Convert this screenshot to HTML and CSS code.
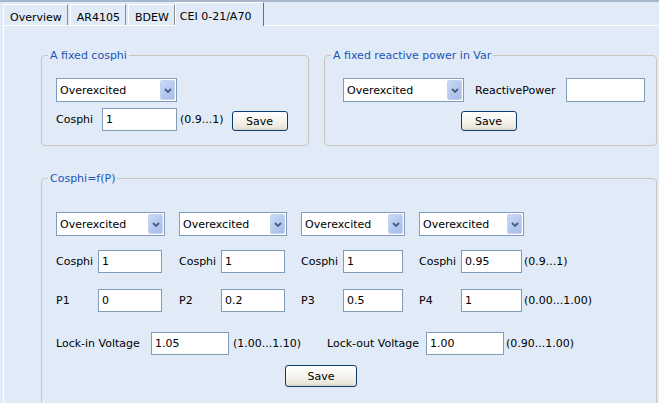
FILE: index.html
```html
<!DOCTYPE html>
<html>
<head>
<meta charset="utf-8">
<title>CEI 0-21/A70</title>
<link rel="stylesheet" href="styles.css">
</head>
<body>
<div class="tabbar">
  <div class="tab">Overview</div>
  <div class="tab">AR4105</div>
  <div class="tab">BDEW</div>
  <div class="tab active">CEI 0-21/A70</div>
</div>
<div class="panel">
  <div class="top-row">
    <fieldset class="fs fs-cos">
      <legend>A fixed cosphi</legend>
      <div class="select w121"><span class="sel-text">Overexcited</span><span class="arrow"><svg width="8" height="5" viewBox="0 0 8 5"><path d="M1 1l3 3 3-3" fill="none" stroke="#4a5d82" stroke-width="1.8"/></svg></span></div>
      <div class="row mt6">
        <span class="lbl w46">Cosphi</span>
        <input class="tb w75" type="text" value="1">
        <span class="range ml3">(0.9...1)</span>
        <button class="btn ml8 bottom">Save</button>
      </div>
    </fieldset>
    <fieldset class="fs fs-var">
      <legend>A fixed reactive power in Var</legend>
      <div class="row">
        <div class="select w121"><span class="sel-text">Overexcited</span><span class="arrow"><svg width="8" height="5" viewBox="0 0 8 5"><path d="M1 1l3 3 3-3" fill="none" stroke="#4a5d82" stroke-width="1.8"/></svg></span></div>
        <span class="lbl ml11">ReactivePower</span>
        <input class="tb w79 h24 ml10" type="text" value="">
      </div>
      <div class="row center mt9">
        <button class="btn">Save</button>
      </div>
    </fieldset>
  </div>
  <fieldset class="fs fs-curve">
    <legend>Cosphi=f(P)</legend>
    <div class="grid">
      <div class="select"><span class="sel-text">Overexcited</span><span class="arrow"><svg width="8" height="5" viewBox="0 0 8 5"><path d="M1 1l3 3 3-3" fill="none" stroke="#4a5d82" stroke-width="1.8"/></svg></span></div>
      <div class="select"><span class="sel-text">Overexcited</span><span class="arrow"><svg width="8" height="5" viewBox="0 0 8 5"><path d="M1 1l3 3 3-3" fill="none" stroke="#4a5d82" stroke-width="1.8"/></svg></span></div>
      <div class="select"><span class="sel-text">Overexcited</span><span class="arrow"><svg width="8" height="5" viewBox="0 0 8 5"><path d="M1 1l3 3 3-3" fill="none" stroke="#4a5d82" stroke-width="1.8"/></svg></span></div>
      <div class="select w105"><span class="sel-text">Overexcited</span><span class="arrow"><svg width="8" height="5" viewBox="0 0 8 5"><path d="M1 1l3 3 3-3" fill="none" stroke="#4a5d82" stroke-width="1.8"/></svg></span></div>

      <div class="pair"><span class="lbl w42">Cosphi</span><input class="tb w64" type="text" value="1"></div>
      <div class="pair"><span class="lbl w42">Cosphi</span><input class="tb w64" type="text" value="1"></div>
      <div class="pair"><span class="lbl w42">Cosphi</span><input class="tb w60" type="text" value="1"></div>
      <div class="pair"><span class="lbl w42">Cosphi</span><input class="tb w61" type="text" value="0.95"><span class="range ml2">(0.9...1)</span></div>

      <div class="pair"><span class="lbl w42">P1</span><input class="tb w64" type="text" value="0"></div>
      <div class="pair"><span class="lbl w42">P2</span><input class="tb w64" type="text" value="0.2"></div>
      <div class="pair"><span class="lbl w42">P3</span><input class="tb w60" type="text" value="0.5"></div>
      <div class="pair"><span class="lbl w42">P4</span><input class="tb w61" type="text" value="1"><span class="range ml2">(0.00...1.00)</span></div>
    </div>
    <div class="row lock">
      <span class="lbl w95">Lock-in Voltage</span>
      <input class="tb w78" type="text" value="1.05">
      <span class="range ml4 w94">(1.00...1.10)</span>
      <span class="lbl w99">Lock-out Voltage</span>
      <input class="tb w78" type="text" value="1.00">
      <span class="range ml2">(0.90...1.00)</span>
    </div>
    <div class="save-row">
      <button class="btn btn-lg">Save</button>
    </div>
  </fieldset>
</div>
</body>
</html>
```

FILE: styles.css
```css
html, body {
  margin: 0;
  padding: 0;
}
body {
  background: #e0ebf7;
  font-family: "DejaVu Sans", "Liberation Sans", sans-serif;
  font-size: 11px;
  line-height: 13px;
  color: #000;
  overflow: hidden;
  width: 659px;
  height: 403px;
}

/* Tabs */
.tabbar {
  height: 23px;
  border-top: 2px solid #a8b8cc;
  display: flex;
  align-items: flex-end;
  padding-left: 3px;
}
.tab {
  height: 21px;
  box-sizing: border-box;
  padding: 6px 5px 1px 6px;
  border-top: 1px solid #ffffff;
  border-left: 1px solid #ffffff;
  border-right: 1px solid #8c8c8c;
  margin-right: 2px;
  white-space: nowrap;
  background: #e0ebf7;
}
.tab.active {
  position: relative;
  z-index: 1;
  height: 24px;
  margin-bottom: -1px;
  margin-left: -2px;
  padding: 7px 12px 3px 4px;
  border-right: 1px solid #6e6e6e;
  background: #e0ebf7;
}

/* Panel */
.panel {
  margin-left: 3px;
  border-top: 1px solid #ffffff;
  border-left: 1px solid #ffffff;
  padding: 23px 0 0 37px;
  min-height: 400px;
  background: #e0ebf7;
}
.top-row {
  display: flex;
  gap: 15px;
  align-items: stretch;
}

.fs {
  margin: 0;
  border: 1px solid #cac7b9;
  border-radius: 4px;
  box-sizing: border-box;
  min-width: 0;
}
.fs legend {
  padding: 0 2px;
  margin-left: -8px;
  color: #2254b6;
  line-height: 13px;
}
.fs-cos {
  width: 268px;
  padding: 16px 14px 14px 14px;
}
.fs-var {
  width: 333px;
  padding: 16px 22px 14px 18px;
}
.fs-var legend {
  margin-left: -12px;
}
.fs-curve {
  width: 616px;
  margin-top: 26px;
  padding: 27px 14px 30px 14px;
}

/* Rows */
.row {
  display: flex;
  align-items: center;
}
.row.center {
  justify-content: center;
}

.lbl {
  white-space: nowrap;
  flex: none;
}
.range {
  white-space: nowrap;
  flex: none;
}

/* Select */
.select {
  display: flex;
  align-items: center;
  height: 24px;
  box-sizing: border-box;
  border: 1px solid #7f9db9;
  background: #ffffff;
  padding-left: 3px;
  width: 100%;
}
.select.w121 { width: 121px; flex: none; }
.select.w105 { width: 105px; }
.sel-text {
  flex: 1;
  white-space: nowrap;
  overflow: hidden;
}
.arrow {
  flex: none;
  width: 15px;
  height: 20px;
  box-sizing: border-box;
  margin-right: 1px;
  border: 1px solid #c3d3f1;
  border-radius: 2px;
  background: linear-gradient(135deg, #cadaf8 0%, #b4c8ef 55%, #a6bde9 100%);
  display: flex;
  align-items: center;
  justify-content: center;
}
.arrow svg { display: block; }

/* Text inputs */
.tb {
  flex: none;
  height: 23px;
  box-sizing: border-box;
  border: 1px solid #7f9db9;
  background: #ffffff;
  padding: 0 3px;
  margin: 0;
  font-family: "DejaVu Sans", "Liberation Sans", sans-serif;
  font-size: 11px;
  color: #000;
  outline: none;
}

/* Buttons */
.btn {
  flex: none;
  width: 56px;
  height: 20px;
  padding: 0;
  margin: 0;
  border: 1px solid #0a3d73;
  border-radius: 3px;
  background: linear-gradient(#ffffff 0%, #f6f5f0 45%, #ebe8dc 85%, #d9d5c6 100%);
  font-family: "DejaVu Sans", "Liberation Sans", sans-serif;
  font-size: 11px;
  color: #000;
  line-height: 13px;
}
.btn-lg {
  width: 72px;
  height: 22px;
}

/* Cosphi=f(P) grid */
.grid {
  display: grid;
  grid-template-columns: 109px 108px 104px auto;
  grid-template-rows: 24px 37px 39px;
  column-gap: 14px;
  align-items: end;
}
.pair {
  display: flex;
  align-items: center;
}
.lock {
  margin-top: 20px;
}
.save-row {
  width: 530px;
  display: flex;
  justify-content: center;
  margin-top: 10px;
}

/* Utilities (last so they win) */
.mt6 { margin-top: 6px; }
.mt9 { margin-top: 9px; }
.ml2 { margin-left: 2px; }
.ml3 { margin-left: 3px; }
.ml4 { margin-left: 4px; }
.ml8 { margin-left: 8px; }
.ml10 { margin-left: 10px; }
.ml11 { margin-left: 11px; }
.bottom { align-self: flex-end; }
.w42 { width: 42px; }
.w46 { width: 46px; }
.w94 { width: 94px; }
.w95 { width: 95px; }
.w99 { width: 99px; }
.w60 { width: 60px; }
.w61 { width: 61px; }
.w64 { width: 64px; }
.w75 { width: 75px; }
.w78 { width: 78px; }
.w79 { width: 79px; }
.h24 { height: 24px; }
```
